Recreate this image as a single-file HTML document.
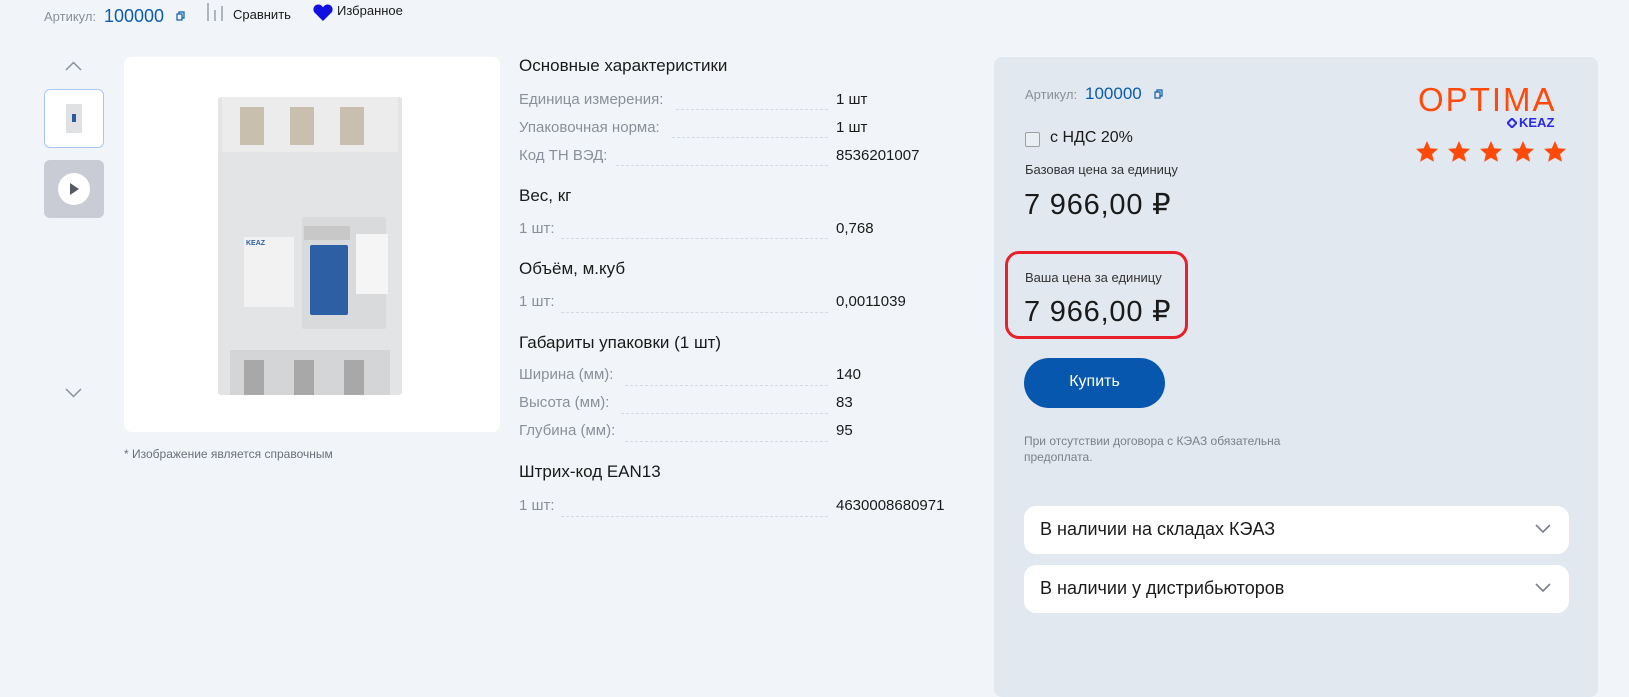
<!DOCTYPE html>
<html><head><meta charset="utf-8"><style>
*{box-sizing:border-box;margin:0;padding:0}
body{width:1629px;height:677px;background:#f1f5f9;font-family:"Liberation Sans",sans-serif;color:#1a1a1a;position:relative;overflow:hidden}
.a{position:absolute;white-space:nowrap}
.g{color:#8a9099}
.blue{color:#0b5cad}
.h{font-size:17px;color:#1a1a1a}
.lbl{font-size:15px;color:#8a9099}
.val{font-size:15px;color:#1a1a1a}
.dot{position:absolute;border-bottom:1px dashed #d3d9e0;height:1px}
.acc{position:absolute;left:1024px;width:545px;height:48px;background:#fff;border-radius:12px;font-size:18px;padding:13px 0 0 16px}
.acc svg{position:absolute;right:18px;top:18px}
.pr{font-size:29px;letter-spacing:0.8px}
</style></head><body>
<!-- top row -->
<div class="a g" style="left:44px;top:9px;font-size:13px">Артикул:</div>
<div class="a blue" style="left:104px;top:6px;font-size:18px">100000</div>
<svg class="a" style="left:176px;top:11px" width="9" height="10" viewBox="0 0 9 10"><rect x="1" y="3" width="5" height="6" fill="none" stroke="#0b5cad" stroke-width="1.2"/><path d="M3 3V1h5v6H6" fill="none" stroke="#0b5cad" stroke-width="1.2"/></svg>
<svg class="a" style="left:207px;top:3px" width="16" height="18"><path d="M1 0v18M8 7v11M15 3v15" stroke="#9aa0a8" stroke-width="1.5"/></svg>
<div class="a" style="left:233px;top:7px;font-size:13px">Сравнить</div>
<svg class="a" style="left:313px;top:4px" width="20" height="17" viewBox="0 0 20 17"><path d="M10 17L1.5 8.5C-1 5.5 1 0.5 5.5 0.5C7.7 0.5 9 2 10 3.3C11 2 12.3 0.5 14.5 0.5C19 0.5 21 5.5 18.5 8.5Z" fill="#1010e0"/></svg>
<div class="a" style="left:337px;top:3px;font-size:13px">Избранное</div>

<!-- thumbnails -->
<svg class="a" style="left:65px;top:61px" width="17" height="10"><path d="M1 9L8.5 1.5 16 9" fill="none" stroke="#8a9099" stroke-width="1.5"/></svg>
<div class="a" style="left:44px;top:89px;width:60px;height:59px;background:#fff;border:1px solid #a9c8ef;border-radius:6px"></div>
<div class="a" style="left:66px;top:104px;width:16px;height:29px;background:#dfe1e3;border-radius:1px"></div>
<div class="a" style="left:72px;top:114px;width:4px;height:8px;background:#2a5c9c"></div>
<div class="a" style="left:44px;top:160px;width:60px;height:58px;background:#c9ccd5;border-radius:6px"></div>
<div class="a" style="left:58px;top:173px;width:32px;height:32px;background:#fff;border-radius:50%"></div>
<svg class="a" style="left:70px;top:183px" width="10" height="12"><path d="M0 0L9 6 0 12Z" fill="#555a66"/></svg>
<svg class="a" style="left:65px;top:388px" width="17" height="10"><path d="M1 1L8.5 8.5 16 1" fill="none" stroke="#8a9099" stroke-width="1.5"/></svg>

<!-- main image -->
<div class="a" style="left:124px;top:57px;width:376px;height:375px;background:#fff;border-radius:8px"></div>
<div class="a" style="left:218px;top:97px;width:184px;height:298px;background:#e3e4e5;border-radius:3px"></div>
<div class="a" style="left:222px;top:97px;width:176px;height:55px;background:#ececec"></div>
<div class="a" style="left:240px;top:107px;width:24px;height:38px;background:#c9bfae"></div>
<div class="a" style="left:290px;top:107px;width:24px;height:38px;background:#c9bfae"></div>
<div class="a" style="left:340px;top:107px;width:24px;height:38px;background:#c9bfae"></div>
<div class="a" style="left:302px;top:217px;width:84px;height:112px;background:#d9dadb;border-radius:2px"></div>
<div class="a" style="left:304px;top:226px;width:46px;height:14px;background:#c8c8c8"></div>
<div class="a" style="left:310px;top:245px;width:38px;height:70px;background:#2c5fa3;border-radius:2px"></div>
<div class="a" style="left:356px;top:234px;width:32px;height:60px;background:#f5f5f5"></div>
<div class="a" style="left:244px;top:237px;width:50px;height:70px;background:#f2f2f2"></div>
<div class="a" style="left:246px;top:240px;font-size:7px;color:#2c5fa3;font-weight:bold">KEAZ</div>
<div class="a" style="left:230px;top:350px;width:160px;height:45px;background:#d4d5d6"></div>
<div class="a" style="left:244px;top:360px;width:20px;height:35px;background:#a8a8a8"></div>
<div class="a" style="left:294px;top:360px;width:20px;height:35px;background:#a8a8a8"></div>
<div class="a" style="left:344px;top:360px;width:20px;height:35px;background:#a8a8a8"></div>
<div class="a g" style="left:124px;top:447px;font-size:12px;color:#6a7079">* Изображение является справочным</div>

<!-- specs -->
<div class="a h" style="left:519px;top:56px">Основные характеристики</div>
<div class="a lbl" style="left:519px;top:91px">Единица измерения:</div><div class="dot" style="left:676px;top:109px;width:152px"></div><div class="a val" style="left:836px;top:91px">1 шт</div>
<div class="a lbl" style="left:519px;top:119px">Упаковочная норма:</div><div class="dot" style="left:672px;top:137px;width:156px"></div><div class="a val" style="left:836px;top:119px">1 шт</div>
<div class="a lbl" style="left:519px;top:147px">Код ТН ВЭД:</div><div class="dot" style="left:616px;top:165px;width:212px"></div><div class="a val" style="left:836px;top:147px">8536201007</div>
<div class="a h" style="left:519px;top:186px">Вес, кг</div>
<div class="a lbl" style="left:519px;top:220px">1 шт:</div><div class="dot" style="left:561px;top:238px;width:267px"></div><div class="a val" style="left:836px;top:220px">0,768</div>
<div class="a h" style="left:519px;top:259px">Объём, м.куб</div>
<div class="a lbl" style="left:519px;top:293px">1 шт:</div><div class="dot" style="left:561px;top:312px;width:267px"></div><div class="a val" style="left:836px;top:293px">0,0011039</div>
<div class="a h" style="left:519px;top:333px">Габариты упаковки (1 шт)</div>
<div class="a lbl" style="left:519px;top:366px">Ширина (мм):</div><div class="dot" style="left:625px;top:385px;width:203px"></div><div class="a val" style="left:836px;top:366px">140</div>
<div class="a lbl" style="left:519px;top:394px">Высота (мм):</div><div class="dot" style="left:621px;top:413px;width:207px"></div><div class="a val" style="left:836px;top:394px">83</div>
<div class="a lbl" style="left:519px;top:422px">Глубина (мм):</div><div class="dot" style="left:625px;top:441px;width:203px"></div><div class="a val" style="left:836px;top:422px">95</div>
<div class="a h" style="left:519px;top:462px">Штрих-код EAN13</div>
<div class="a lbl" style="left:519px;top:497px">1 шт:</div><div class="dot" style="left:561px;top:516px;width:267px"></div><div class="a val" style="left:836px;top:497px">4630008680971</div>

<!-- panel -->
<div class="a" style="left:994px;top:57px;width:604px;height:640px;background:#e1e8f0;border-radius:8px"></div>
<div class="a g" style="left:1025px;top:87px;font-size:13px">Артикул:</div>
<div class="a blue" style="left:1085px;top:84px;font-size:17px">100000</div>
<svg class="a" style="left:1154px;top:89px" width="9" height="10" viewBox="0 0 9 10"><rect x="1" y="3" width="5" height="6" fill="none" stroke="#0b5cad" stroke-width="1.2"/><path d="M3 3V1h5v6H6" fill="none" stroke="#0b5cad" stroke-width="1.2"/></svg>
<div class="a" style="left:1025px;top:132px;width:15px;height:15px;border:1px solid #9aa0a8;border-radius:2px;background:#e9eef3"></div>
<div class="a" style="left:1050px;top:129px;font-size:16px">с НДС 20%</div>
<div class="a" style="left:1025px;top:162px;font-size:13px;color:#333">Базовая цена за единицу</div>
<div class="a pr" style="left:1024px;top:187px">7 966,00 ₽</div>
<div class="a" style="left:1005px;top:251px;width:183px;height:88px;border:3px solid #e8202a;border-radius:14px"></div>
<div class="a" style="left:1025px;top:270px;font-size:13px;color:#333">Ваша цена за единицу</div>
<div class="a pr" style="left:1024px;top:294px">7 966,00 ₽</div>
<div class="a" style="left:1024px;top:358px;width:141px;height:50px;background:#0657ad;border-radius:25px;color:#fff;font-size:16px;text-align:center;line-height:48px">Купить</div>
<div class="a" style="left:1024px;top:433px;font-size:12px;color:#7a8089;line-height:16px">При отсутствии договора с КЭАЗ обязательна<br>предоплата.</div>
<div class="acc" style="top:506px">В наличии на складах КЭАЗ<svg width="16" height="10"><path d="M1 1L8 8 15 1" fill="none" stroke="#7a8089" stroke-width="1.6"/></svg></div>
<div class="acc" style="top:565px">В наличии у дистрибьюторов<svg width="16" height="10"><path d="M1 1L8 8 15 1" fill="none" stroke="#7a8089" stroke-width="1.6"/></svg></div>

<!-- logo -->
<div class="a" style="left:1418px;top:83px;font-size:33px;line-height:33px;color:#ff4a0a;letter-spacing:2px">OPTIMA</div>
<svg class="a" style="left:1507px;top:118px" width="10" height="10" viewBox="0 0 10 10"><path d="M5 0.5L9.5 5 5 9.5 0.5 5Z" fill="none" stroke="#2a2ae0" stroke-width="2"/></svg>
<div class="a" style="left:1519px;top:115px;font-size:13px;font-weight:bold;color:#2a2ae0">KEAZ</div>
<svg class="a" style="left:1416px;top:141px" width="152" height="23" viewBox="0 0 152 23">
<defs><path id="s" d="M11 0l3.2 7.2 7.8.7-5.9 5.2 1.8 7.7L11 16.7 4.1 20.8l1.8-7.7L0 7.9l7.8-.7Z" fill="#ff4a0a"/></defs>
<use href="#s" x="0"/><use href="#s" x="32"/><use href="#s" x="64"/><use href="#s" x="96"/><use href="#s" x="128"/>
</svg>
</body></html>
